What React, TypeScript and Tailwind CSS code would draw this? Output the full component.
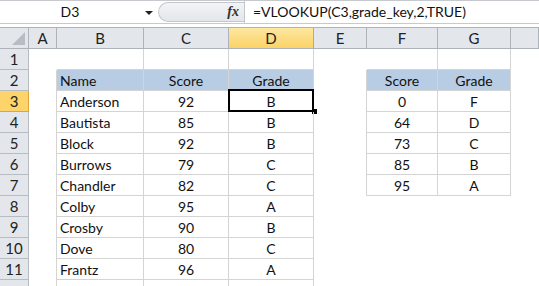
import React from "react";

// Excel 2010-style sheet: VLOOKUP grade example

const COLS = ["A", "B", "C", "D", "E", "F", "G", ""];
const COL_W = ["w-[28px]", "w-[87px]", "w-[85px]", "w-[85px]", "w-[53px]", "w-[71px]", "w-[73px]", "flex-1"];

const students: [string, number, string][] = [
  ["Anderson", 92, "B"],
  ["Bautista", 85, "B"],
  ["Block", 92, "B"],
  ["Burrows", 79, "C"],
  ["Chandler", 82, "C"],
  ["Colby", 95, "A"],
  ["Crosby", 90, "B"],
  ["Dove", 80, "C"],
  ["Frantz", 96, "A"],
];

const gradeKey: [number, string][] = [
  [0, "F"],
  [64, "D"],
  [73, "C"],
  [85, "B"],
  [95, "A"],
];

const LINE = "border-[#d4d4d4]";

function FormulaBar() {
  return (
    <div className="flex h-[24px] border-y border-[#c6c9cd] bg-white">
      <div className="relative flex w-[158px] items-center justify-center">
        <span className="pr-[18px] text-[14px] text-[#111]">D3</span>
        <span className="absolute right-[5px] top-[10px] h-0 w-0 border-x-[4px] border-t-[4px] border-x-transparent border-t-[#222]" />
      </div>
      <div className="my-[1px] flex w-[86px] items-center justify-end rounded-l-full border border-r-0 border-[#c3c7cc] bg-gradient-to-b from-[#f2f4f6] to-[#e3e6ea] pr-[5px]">
        <span className="font-['Liberation_Serif'] text-[14px] font-bold italic text-[#333]">fx</span>
      </div>
      <div className="flex flex-1 items-center border-l border-[#c3c7cc] pl-[8px] text-[14px] text-[#111]">
        =VLOOKUP(C3,grade_key,2,TRUE)
      </div>
    </div>
  );
}

function ColumnHeader() {
  return (
    <div className="flex h-[22px] border-y border-[#aeb3b9]">
      <div className="relative w-[29px] border-r border-[#aeb3b9] bg-[#e3e7ec]">
        <span className="absolute bottom-[3px] right-[3px] h-0 w-0 border-b-[13px] border-l-[13px] border-b-[#b9bdc3] border-l-transparent" />
      </div>
      {COLS.map((c, i) => (
        <div
          key={i}
          className={`${COL_W[i]} flex items-center justify-center border-r text-[15px] ${
            c === "D"
              ? "border-[#e3a33c] bg-gradient-to-b from-[#fde7a0] to-[#fbd365] text-[#222]"
              : "border-[#aeb3b9] bg-[#e3e7ec] text-[#222]"
          }`}
        >
          {c}
        </div>
      ))}
    </div>
  );
}

type Cell = { text?: string | number; align?: "left" | "center"; fill?: boolean; boxed?: boolean; selected?: boolean };

function Row({ n, cells, leftEdge }: { n: number; cells: Cell[]; leftEdge: boolean[] }) {
  return (
    <div className="flex h-[21px]">
      <div
        className={`flex w-[29px] items-center justify-center border-r border-b text-[15px] text-[#222] ${
          n === 3 ? "border-[#e3a33c] bg-[#fcd46a]" : "border-[#b7bcc2] bg-[#e3e7ec]"
        }`}
      >
        {n < 12 ? n : ""}
      </div>
      {COLS.map((_, i) => {
        const c = cells[i] ?? {};
        const edge = leftEdge[i];
        return (
          <div
            key={i}
            className={`${COL_W[i]} relative flex items-center pt-[1px] text-[14px] text-[#111] ${
              c.align === "left" ? "justify-start pl-[3px]" : "justify-center"
            } ${c.boxed ? `border-r border-b ${LINE}` : edge ? `border-r ${LINE}` : "border-r border-transparent"} ${
              c.fill ? "bg-[#b8cce4]" : ""
            }`}
          >
            {c.text}
            {c.selected && (
              <>
                <span className="absolute -left-[1px] -top-[2px] bottom-[-1px] right-[-1px] border-2 border-black" />
                <span className="absolute bottom-[-3px] right-[-4px] h-[5px] w-[5px] bg-black" />
              </>
            )}
          </div>
        );
      })}
    </div>
  );
}

export default function App() {
  const rows: { n: number; cells: Cell[]; leftEdge: boolean[] }[] = [];

  // row 1: only the top edges of both tables
  rows.push({
    n: 1,
    cells: [{}, { boxed: true }, { boxed: true }, { boxed: true }, {}, { boxed: true }, { boxed: true }],
    leftEdge: [false, false, false, false, false, false, false, false],
  });

  for (let r = 2; r <= 12; r++) {
    const cells: Cell[] = [{}];
    const s = r === 2 ? null : students[r - 3];
    if (r === 2) {
      cells.push({ text: "Name", align: "left", fill: true, boxed: true });
      cells.push({ text: "Score", fill: true, boxed: true });
      cells.push({ text: "Grade", fill: true, boxed: true });
    } else {
      cells.push({ text: s?.[0], align: "left", boxed: true });
      cells.push({ text: s?.[1], boxed: true });
      cells.push({ text: s?.[2], boxed: true, selected: r === 3 });
    }
    cells.push({});
    if (r === 2) {
      cells.push({ text: "Score", fill: true, boxed: true });
      cells.push({ text: "Grade", fill: true, boxed: true });
    } else if (r <= 7) {
      const k = gradeKey[r - 3];
      cells.push({ text: k[0], boxed: true });
      cells.push({ text: k[1], boxed: true });
    }
    rows.push({
      n: r,
      cells,
      leftEdge: [true, false, false, false, r <= 7, false, false, false],
    });
  }

  return (
    <div className="h-[286px] w-[539px] overflow-hidden bg-white font-['Lato',sans-serif] leading-none">
      <FormulaBar />
      <div className="h-[3px]" />
      <ColumnHeader />
      {rows.map((r) => (
        <Row key={r.n} n={r.n} cells={r.cells} leftEdge={r.leftEdge} />
      ))}
    </div>
  );
}
